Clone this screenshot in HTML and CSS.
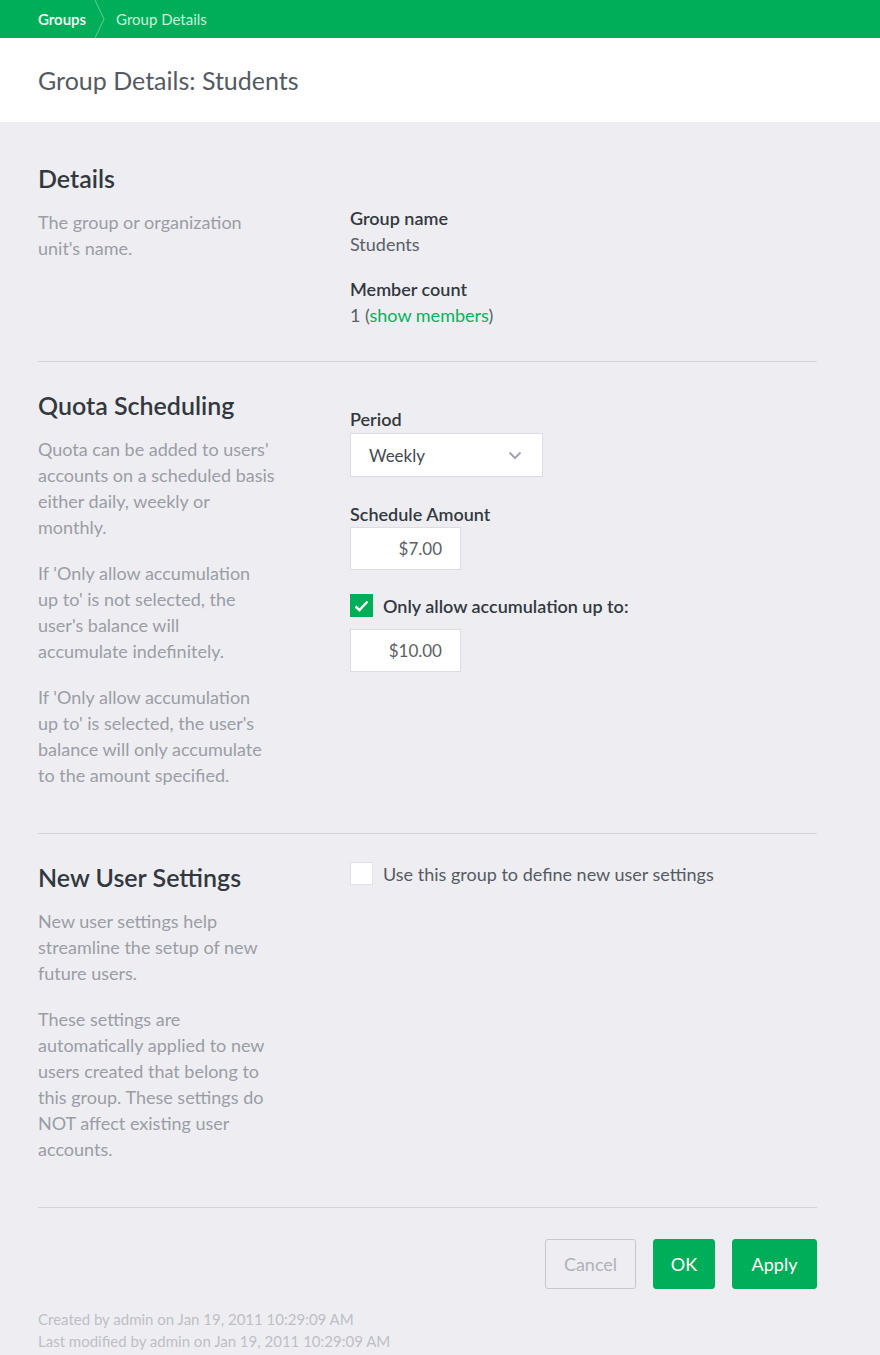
FILE: index.html
```html
<!DOCTYPE html>
<html lang="en">
<head>
    <meta charset="UTF-8">
    <title>Group Details: Students</title>
    <link rel="stylesheet" href="styles.css">
</head>
<body>
    <div class="topbar">
        <a class="crumb crumb-link" href="#">Groups</a>
        <svg class="crumb-sep" width="12" height="38" viewBox="0 0 12 38">
            <polyline points="1,0 10,19 1,38" fill="none" stroke="#4cc78c" stroke-width="1.2"/>
        </svg>
        <span class="crumb crumb-current">Group Details</span>
    </div>

    <div class="page-header">
        <h1>Group Details: Students</h1>
    </div>

    <div class="content">
        <!-- Details -->
        <div class="section section-details">
            <div class="section-info">
                <h2>Details</h2>
                <p>The group or organization<br>unit's name.</p>
            </div>
            <div class="section-fields fields-details">
                <div class="field">
                    <div class="field-label">Group name</div>
                    <div class="field-value">Students</div>
                </div>
                <div class="field">
                    <div class="field-label">Member count</div>
                    <div class="field-value">1 (<a href="#">show members</a>)</div>
                </div>
            </div>
        </div>

        <!-- Quota scheduling -->
        <div class="section">
            <div class="section-info">
                <h2>Quota Scheduling</h2>
                <p>Quota can be added to users'<br>accounts on a scheduled basis<br>either daily, weekly or<br>monthly.</p>
                <p>If 'Only allow accumulation<br>up to' is not selected, the<br>user's balance will<br>accumulate indefinitely.</p>
                <p>If 'Only allow accumulation<br>up to' is selected, the user's<br>balance will only accumulate<br>to the amount specified.</p>
            </div>
            <div class="section-fields fields-quota">
                <div class="field">
                    <div class="field-label">Period</div>
                    <div class="select">
                        <span>Weekly</span>
                        <svg width="14" height="9" viewBox="0 0 14 9">
                            <polyline points="1.5,1.5 7,7 12.5,1.5" fill="none" stroke="#a3a6ad" stroke-width="2"/>
                        </svg>
                    </div>
                </div>
                <div class="field">
                    <div class="field-label">Schedule Amount</div>
                    <div class="input">$7.00</div>
                </div>
                <div class="field">
                    <label class="check-row">
                        <span class="checkbox checked">
                            <svg width="15" height="12" viewBox="0 0 15 12">
                                <polyline points="1.5,6.5 5.5,10 13.5,1.5" fill="none" stroke="#fff" stroke-width="2.4"/>
                            </svg>
                        </span>
                        <span class="check-label bold">Only allow accumulation up to:</span>
                    </label>
                    <div class="input">$10.00</div>
                </div>
            </div>
        </div>

        <!-- New user settings -->
        <div class="section">
            <div class="section-info">
                <h2>New User Settings</h2>
                <p>New user settings help<br>streamline the setup of new<br>future users.</p>
                <p>These settings are<br>automatically applied to new<br>users created that belong to<br>this group. These settings do<br>NOT affect existing user<br>accounts.</p>
            </div>
            <div class="section-fields">
                <label class="check-row">
                    <span class="checkbox"></span>
                    <span class="check-label">Use this group to define new user settings</span>
                </label>
            </div>
        </div>

        <div class="actions">
            <button class="btn btn-cancel">Cancel</button>
            <button class="btn btn-primary btn-ok">OK</button>
            <button class="btn btn-primary btn-apply">Apply</button>
        </div>

        <div class="audit">
            <div>Created by admin on Jan 19, 2011 10:29:09 AM</div>
            <div>Last modified by admin on Jan 19, 2011 10:29:09 AM</div>
        </div>
    </div>
</body>
</html>
```
FILE: styles.css
```css
body {
    margin: 0;
    font-family: Lato, "Open Sans", sans-serif;
    background-color: #eeeef2;
    color: #333840;
}

.topbar {
    height: 38px;
    background-color: #00ae5a;
    display: flex;
    align-items: center;
    padding-left: 38px;
}

.crumb {
    font-size: 15px;
    text-decoration: none;
}

.crumb-link {
    color: #fff;
    font-weight: 600;
}

.crumb-sep {
    margin: 0 10px 0 8px;
}

.crumb-current {
    color: #c9f0dc;
}

.page-header {
    background-color: #fff;
    height: 84px;
    padding: 0 38px;
    display: flex;
    align-items: center;
}

.page-header h1 {
    margin: 0;
    font-size: 25px;
    font-weight: normal;
    color: #555a62;
}

.content {
    width: 779px;
    margin-left: 38px;
    padding-top: 13px;
}

.section {
    display: flex;
    padding: 28px 0 45px;
    border-bottom: 1px solid #d4d5da;
}

.section-details {
    padding-bottom: 33px;
}

.section-info {
    width: 312px;
    flex-shrink: 0;
}

.section-info h2 {
    margin: 0 0 16px;
    font-size: 25px;
    line-height: 30px;
    font-weight: 600;
    color: #333840;
}

.section-info p {
    margin: 0 0 20px;
    font-size: 18px;
    line-height: 26px;
    color: #9a9da5;
}

.section-info p:last-child {
    margin-bottom: 0;
}

.fields-details {
    padding-top: 42px;
}

.fields-quota {
    padding-top: 16px;
}

.field {
    margin-bottom: 24px;
}

.fields-details .field {
    margin-bottom: 19px;
}

.section-fields .field:last-child {
    margin-bottom: 0;
}

.field-label {
    font-size: 18px;
    line-height: 26px;
    font-weight: 600;
    color: #333840;
}

.field-value {
    font-size: 18px;
    line-height: 26px;
    color: #5a5f68;
}

.field-value a {
    color: #00b35c;
    text-decoration: none;
}

.select {
    box-sizing: border-box;
    width: 193px;
    height: 44px;
    margin-top: 1px;
    background-color: #fff;
    border: 1px solid #dcdde2;
    display: flex;
    align-items: center;
    justify-content: space-between;
    padding: 0 20px 0 18px;
    font-size: 17px;
    color: #444850;
}

.input {
    box-sizing: border-box;
    width: 111px;
    height: 43px;
    background-color: #fff;
    border: 1px solid #dcdde2;
    display: flex;
    align-items: center;
    justify-content: flex-end;
    padding-right: 18px;
    font-size: 17px;
    color: #5a5f68;
}

.check-row {
    display: flex;
    align-items: center;
    margin-bottom: 12px;
}

.checkbox {
    box-sizing: border-box;
    width: 23px;
    height: 23px;
    background-color: #fff;
    border: 1px solid #e0e1e6;
    display: flex;
    align-items: center;
    justify-content: center;
    margin-right: 10px;
}

.checkbox.checked {
    background-color: #00ae5a;
    border-color: #00ae5a;
}

.check-label {
    font-size: 18px;
    color: #555a62;
}

.check-label.bold {
    font-weight: 600;
    color: #333840;
}

.actions {
    display: flex;
    justify-content: flex-end;
    gap: 17px;
    padding-top: 31px;
}

.btn {
    height: 50px;
    border-radius: 3px;
    font-family: inherit;
    font-size: 18px;
    padding: 0;
    cursor: pointer;
}

.btn-cancel {
    background-color: transparent;
    border: 1px solid #c5c7ce;
    color: #aeb1b8;
    width: 91px;
}

.btn-primary {
    background-color: #00ae5a;
    border: 1px solid #00ae5a;
    color: #fff;
}

.btn-ok {
    width: 62px;
}

.btn-apply {
    width: 85px;
}

.audit {
    padding-top: 19px;
    font-size: 15px;
    line-height: 22px;
    color: #bdbfc5;
}
```
